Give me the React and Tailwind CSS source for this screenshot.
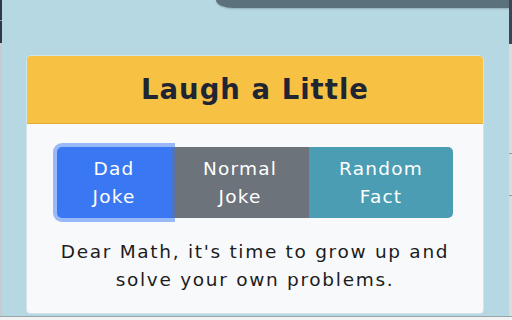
import React from "react";

const font = { fontFamily: '"DejaVu Sans", "Liberation Sans", sans-serif' };

function JokeButtons() {
  return (
    <div className="flex h-[71px] rounded-[5px] text-white text-[18.5px] leading-[27.5px] tracking-[1.2px]">
      <button className="relative z-10 w-[114px] flex flex-col items-center justify-center rounded-l-[5px] bg-[#3a78f3] shadow-[0_0_0_4px_rgba(58,120,243,0.5)]">
        <span>Dad</span>
        <span>Joke</span>
      </button>
      <button className="w-[138px] flex flex-col items-center justify-center bg-[#6c737b]">
        <span>Normal</span>
        <span>Joke</span>
      </button>
      <button className="w-[144px] flex flex-col items-center justify-center rounded-r-[5px] bg-[#4a9db3]">
        <span>Random</span>
        <span>Fact</span>
      </button>
    </div>
  );
}

export default function App() {
  return (
    <div className="w-[512px] h-[320px] flex flex-col bg-[#f3f3f3] overflow-hidden" style={font}>
      <div className="flex h-[316px]">
        {/* page behind, left edge */}
        <div className="w-[2px] flex flex-col">
          <div className="h-[20px] bg-[#2e3a48]" />
          <div className="h-[1px] bg-[#8a96a3]" />
          <div className="h-[22px] bg-[#2e3a48]" />
          <div className="flex-1 bg-[#c9cccf]" />
        </div>

        <div className="flex-1 flex flex-col bg-[#b6d8e3]">
          <div className="flex h-[8px]">
            <div className="w-[214px]" />
            <div className="flex-1 bg-[#5b717c] rounded-bl-[18px_8px] shadow-[0_1px_2px_rgba(0,0,0,0.2)]" />
          </div>

          <div className="mt-[47px] mb-[2px] ml-[24px] w-[458px] flex-1 flex flex-col rounded-t-[5px] rounded-b-[4px] border border-[#d3e4ea] overflow-hidden">
            <div className="h-[68px] flex items-center justify-center bg-[#f7c244] border-b border-[#e3ad37]">
              <h1 className="text-[27.5px] font-bold tracking-[1px] text-[#1f2532]">Laugh a Little</h1>
            </div>
            <div className="flex-1 flex flex-col items-center bg-[#f8f9fb] pt-[23px]">
              <JokeButtons />
              <p className="mt-[20px] w-[410px] text-center text-[18.5px] leading-[28px] tracking-[1.7px] text-[#1c1c1c]">
                Dear Math, it's time to grow up and solve your own problems.
              </p>
            </div>
          </div>
        </div>

        {/* page behind, right edge */}
        <div className="w-[3px] flex flex-col">
          <div className="h-[44px] bg-[#3a4654]" />
          <div className="h-[110px] bg-[#dcdcdc] border-b border-[#9a9a9a]" />
          <div className="h-[42px] bg-[#dcdcdc] border-b border-[#9a9a9a]" />
          <div className="flex-1 bg-[#dcdcdc]" />
        </div>
      </div>
      <div className="flex-1 border-t border-[#9aa3a8]" />
    </div>
  );
}
